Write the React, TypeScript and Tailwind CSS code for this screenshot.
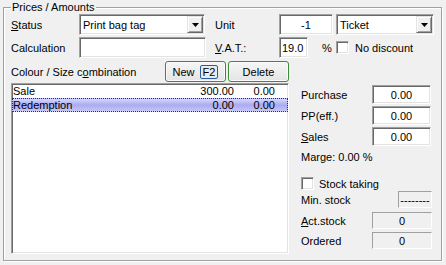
import React from "react";

const sunken =
  "border border-t-[#a0a0a0] border-l-[#a0a0a0] border-b-white border-r-white shadow-[inset_1px_1px_0_#696969,inset_-1px_-1px_0_#e3e3e3]";
const staticEdge =
  "border border-t-[#a0a0a0] border-l-[#a0a0a0] border-b-white border-r-white";

function DropArrow() {
  return (
    <div className="ml-auto mr-[1px] w-[16px] h-[17px] flex items-center justify-center bg-[#f0f0f0] border border-t-[#e3e3e3] border-l-[#e3e3e3] border-b-[#696969] border-r-[#696969] shadow-[inset_1px_1px_0_#fff,inset_-1px_-1px_0_#a0a0a0]">
      <svg width="7" height="4" viewBox="0 0 7 4">
        <path d="M0 0h7L3.5 4z" fill="#000" />
      </svg>
    </div>
  );
}

function Combo({ className, text }: { className: string; text: string }) {
  return (
    <div className={`flex items-center h-[21px] bg-white pl-[3px] ${sunken} ${className}`}>
      <span>{text}</span>
      <DropArrow />
    </div>
  );
}

function Field({ className, text = "", align = "center" }: { className: string; text?: string; align?: "center" | "left" }) {
  return (
    <div
      className={`flex items-center bg-white ${sunken} ${className} ${
        align === "center" ? "justify-center" : "justify-start pl-[2px]"
      }`}
    >
      {text}
    </div>
  );
}

function Check() {
  return <div className={`w-[13px] h-[13px] shrink-0 bg-white ${sunken}`} />;
}

function Button({ children }: { children: React.ReactNode }) {
  return (
    <div className="w-[61px] h-[21px] flex items-center justify-center gap-[5px] rounded-[3px] border border-[#3d8a3d] bg-gradient-to-b from-[#f6f6f6] to-[#e4e4e4] shadow-[inset_0_0_0_1px_#fafafa]">
      {children}
    </div>
  );
}

const rows = [
  { name: "Sale", a: "300.00", b: "0.00", sel: false },
  { name: "Redemption", a: "0.00", b: "0.00", sel: true },
];

export default function App() {
  return (
    <div className="w-[446px] h-[265px] overflow-hidden bg-[#f0f0f0] pt-[7px] pl-[3px] font-['Liberation_Sans',Arial,sans-serif] text-[11px] leading-[14px] text-black">
      <div className="w-[439px] h-[254px] border border-[#a0a0a0] shadow-[inset_1px_1px_0_#fff,1px_1px_0_#fff]">
        <div className="-mt-[8px] ml-[7px] px-[1px] w-fit h-[14px] bg-[#f0f0f0]">Prices / Amounts</div>

        <div className="pl-[7px]">
          {/* row 1 */}
          <div className="flex items-center h-[21px]">
            <span className="w-[68px]">
              <u>S</u>tatus
            </span>
            <Combo className="w-[126px]" text="Print bag tag" />
            <span className="ml-[10px] w-[64px]">Unit</span>
            <Field className="w-[54px] h-[21px]" text="-1" />
            <Combo className="ml-[3px] w-[98px]" text="Ticket" />
          </div>

          {/* row 2 */}
          <div className="mt-[2px] flex items-center h-[21px]">
            <span className="w-[68px]">Calculation</span>
            <Field className="w-[127px] h-[21px]" />
            <span className="ml-[9px] w-[64px]">
              <u>V</u>.A.T.:
            </span>
            <Field className="w-[29px] h-[21px]" text="19.0" align="left" />
            <span className="ml-[14px] w-[14px]">%</span>
            <Check />
            <span className="ml-[6px]">No discount</span>
          </div>

          {/* row 3 */}
          <div className="mt-[3px] flex items-center h-[21px]">
            <span className="w-[154px]">
              Colour / Size c<u>o</u>mbination
            </span>
            <Button>
              <span>New</span>
              <span className="px-[2px] h-[14px] leading-[12px] rounded-[2px] border border-[#2b5d9b] bg-[#e3edf8]">F2</span>
            </Button>
            <div className="ml-[2px]">
              <Button>Delete</Button>
            </div>
          </div>

          {/* list + side panel */}
          <div className="mt-[1px] flex">
            <div className={`w-[278px] h-[171px] bg-white ${sunken}`}>
              {rows.map((r) => (
                <div
                  key={r.name}
                  className={`flex h-[14px] leading-[12px] border border-dotted ${
                    r.sel
                      ? "border-[#333] bg-gradient-to-b from-[#d8d8fc] via-[#aaaaf2] to-[#c6c6f8]"
                      : "border-transparent"
                  }`}
                >
                  <span className="flex-1">{r.name}</span>
                  <span className="w-[60px] text-right">{r.a}</span>
                  <span className="w-[41px] text-right">{r.b}</span>
                  <span className="w-[12px]" />
                </div>
              ))}
            </div>

            <div className="ml-[12px] w-[131px] pt-[2px] flex flex-col">
              <div className="flex items-center h-[19px]">
                <span className="w-[71px]">Purchase</span>
                <Field className="w-[59px] h-[19px]" text="0.00" />
              </div>
              <div className="mt-[2px] flex items-center h-[19px]">
                <span className="w-[71px]">PP(eff.)</span>
                <Field className="w-[59px] h-[19px]" text="0.00" />
              </div>
              <div className="mt-[2px] flex items-center h-[19px]">
                <span className="w-[71px]">
                  <u>S</u>ales
                </span>
                <Field className="w-[59px] h-[19px]" text="0.00" />
              </div>
              <div className="mt-[4px] h-[14px]">Marge: 0.00 %</div>
              <div className="mt-[13px] flex items-center h-[13px]">
                <Check />
                <span className="ml-[5px]">Stock taking</span>
              </div>
              <div className="mt-[1px] flex items-center h-[17px]">
                <span>Min. stock</span>
                <div className={`ml-auto w-[34px] h-[17px] flex items-center justify-center ${staticEdge}`}>--------</div>
              </div>
              <div className="mt-[4px] flex items-center h-[17px]">
                <span>
                  <u>A</u>ct.stock
                </span>
                <div className={`ml-auto w-[60px] h-[17px] flex items-center justify-center ${staticEdge}`}>0</div>
              </div>
              <div className="mt-[3px] flex items-center h-[17px]">
                <span>Ordered</span>
                <div className={`ml-auto w-[60px] h-[17px] flex items-center justify-center ${staticEdge}`}>0</div>
              </div>
            </div>
          </div>
        </div>
      </div>
    </div>
  );
}
